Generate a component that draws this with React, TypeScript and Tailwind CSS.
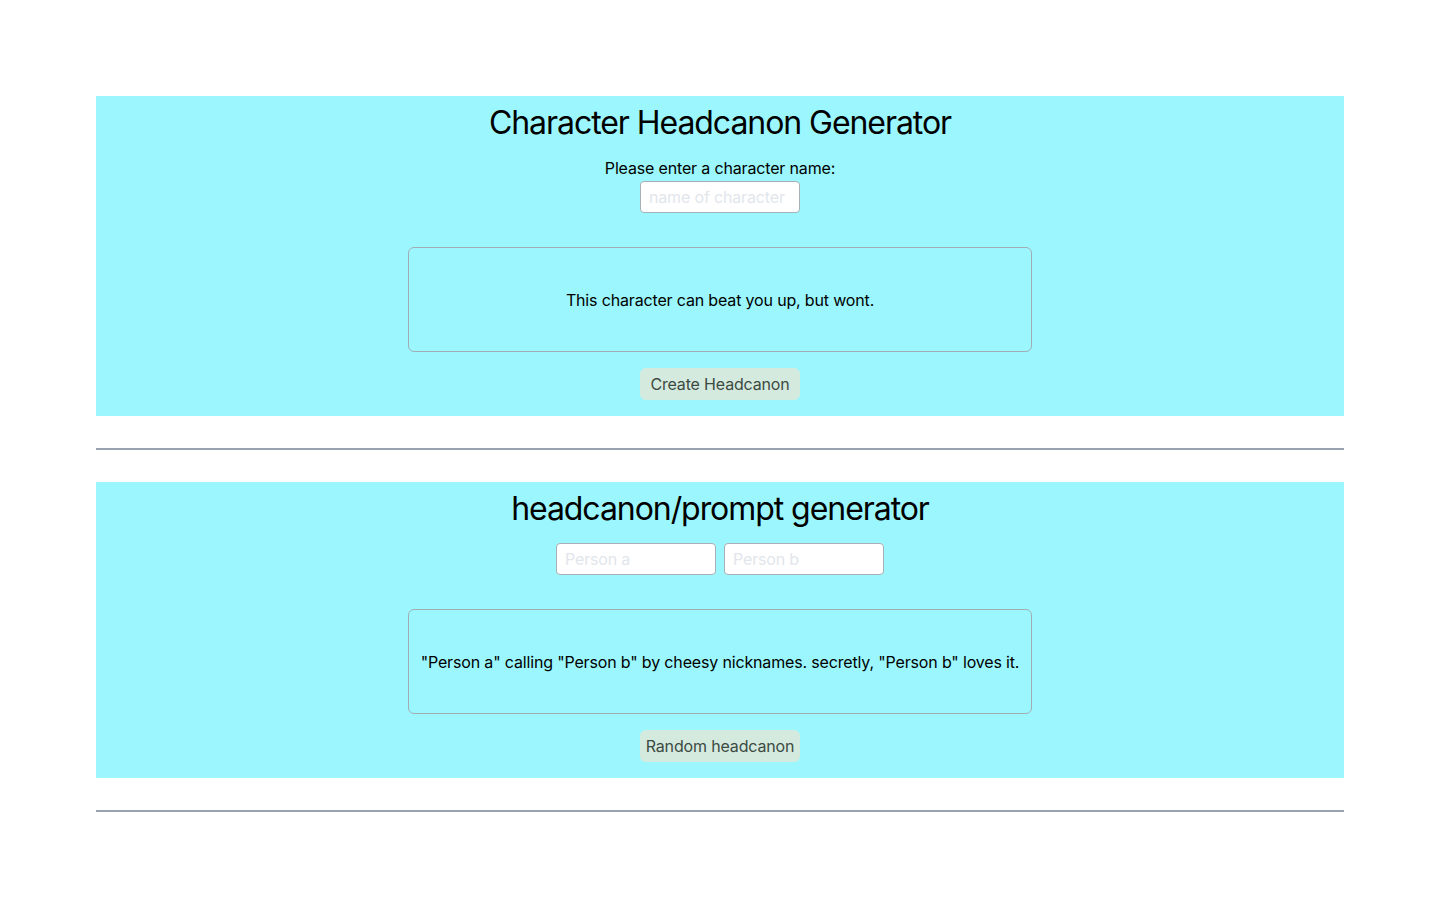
import { useState } from 'react';

const CharacterGenerator = () => {
  const [name, setName] = useState('');
  return (
    <section className="flex flex-col items-center bg-[#9bf7fd] pt-[7px] pb-4">
      <h1 className="text-[32px] leading-[40px] tracking-[-0.033em] text-black">Character Headcanon Generator</h1>
      <label className="mt-[13px] text-base leading-6 text-black">Please enter a character name:</label>
      <input
        className="mt-px h-8 w-40 rounded border border-[#a8b0b5] bg-white px-2 text-base text-black placeholder:text-[#e2e6ec] outline-none"
        placeholder="name of character"
        value={name}
        onChange={(e) => setName(e.target.value)}
      />
      <div className="mt-[34px] flex h-[105px] w-[624px] items-center justify-center rounded-md border border-[#a2adb3] px-2 text-center text-base text-black">
        This character can beat you up, but wont.
      </div>
      <button className="mt-4 h-8 w-40 rounded-md bg-[#d5eadf] text-base text-[#3c4a42]">
        Create Headcanon
      </button>
    </section>
  );
};

const PromptGenerator = () => {
  const [a, setA] = useState('');
  const [b, setB] = useState('');
  return (
    <section className="flex flex-col items-center bg-[#9bf7fd] pt-[7px] pb-4">
      <h1 className="text-[32px] leading-[40px] tracking-[-0.033em] text-black">headcanon/prompt generator</h1>
      <div className="mt-[14px] flex gap-2">
        <input
          className="h-8 w-40 rounded border border-[#a8b0b5] bg-white px-2 text-base text-black placeholder:text-[#e2e6ec] outline-none"
          placeholder="Person a"
          value={a}
          onChange={(e) => setA(e.target.value)}
        />
        <input
          className="h-8 w-40 rounded border border-[#a8b0b5] bg-white px-2 text-base text-black placeholder:text-[#e2e6ec] outline-none"
          placeholder="Person b"
          value={b}
          onChange={(e) => setB(e.target.value)}
        />
      </div>
      <div className="mt-[34px] flex h-[105px] w-[624px] items-center justify-center rounded-md border border-[#a2adb3] px-2 text-center text-base text-black">
        "Person a" calling "Person b" by cheesy nicknames. secretly, "Person b" loves it.
      </div>
      <button className="mt-4 h-8 w-40 rounded-md bg-[#d5eadf] text-base text-[#3c4a42]">
        Random headcanon
      </button>
    </section>
  );
};

export default function App() {
  return (
    <main className="min-h-screen bg-white px-24 pt-24 font-['Inter',sans-serif] tracking-[-0.01em]">
      <CharacterGenerator />
      <hr className="my-8 border-t-2 border-[#97a3b0]" />
      <PromptGenerator />
      <hr className="my-8 border-t-2 border-[#97a3b0]" />
    </main>
  );
}
